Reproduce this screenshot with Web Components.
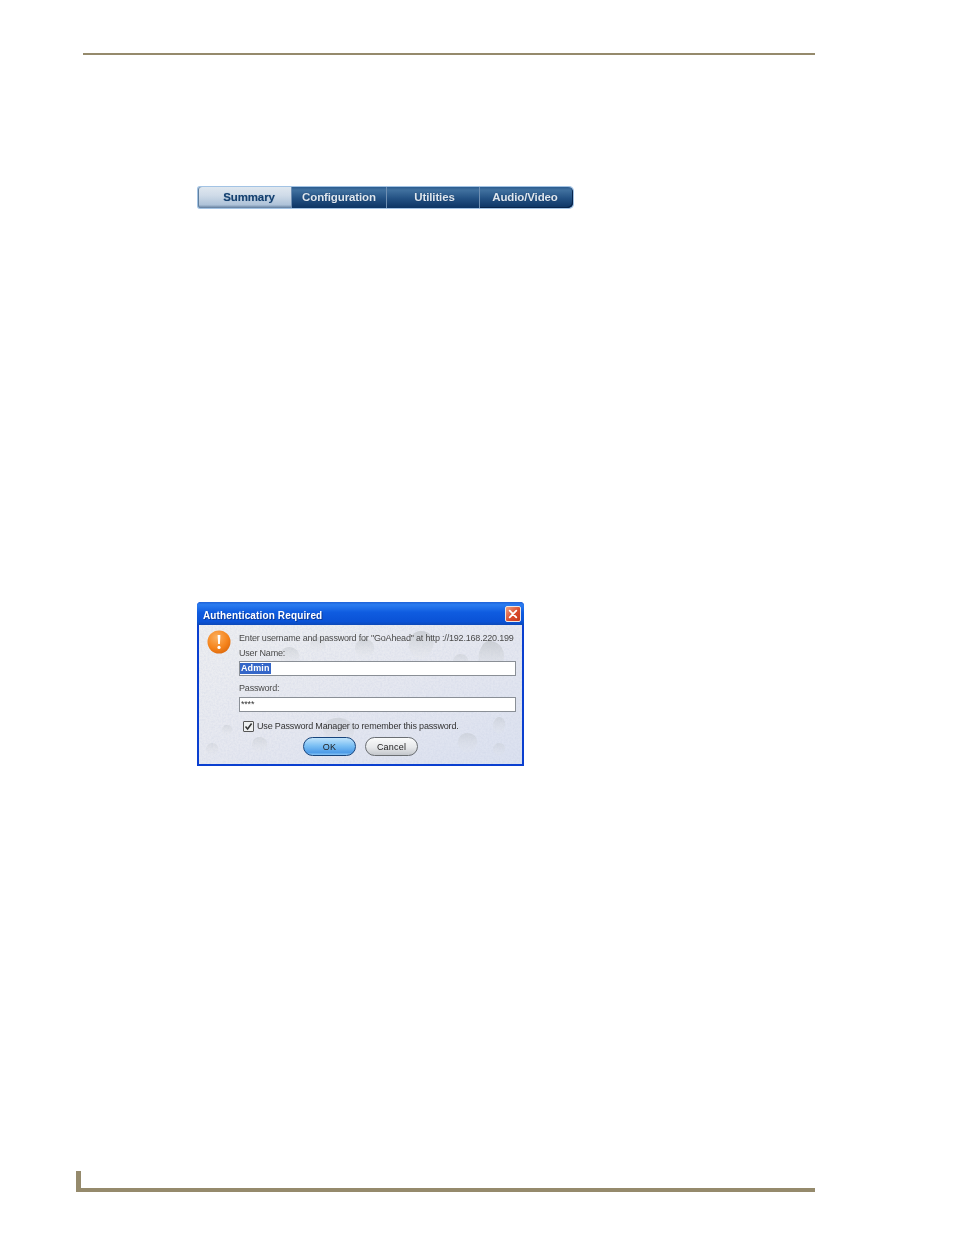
<!DOCTYPE html>
<html><head><meta charset="utf-8"><style>
html,body{margin:0;padding:0;background:#fff}
body{width:954px;height:1235px;overflow:hidden;font-family:"Liberation Sans",sans-serif}
doc-page{display:block}
</style></head><body>
<doc-page>
  <page-rule-top></page-rule-top>
  <tab-bar>
    <tab-item active w="93">Summary</tab-item>
    <tab-item w="95">Configuration</tab-item>
    <tab-item w="93">Utilities</tab-item>
    <tab-item w="94" last>Audio/Video</tab-item>
  </tab-bar>
  <auth-dialog></auth-dialog>
  <page-rule-bottom></page-rule-bottom>
</doc-page>
<script>
const def=(n,html,extra)=>customElements.define(n,class extends HTMLElement{
  constructor(){super();this.attachShadow({mode:'open'}).innerHTML=html;}
  connectedCallback(){extra&&extra(this)}
});
def('page-rule-top',`<style>:host{display:block;padding:53px 139px 0 83px}
div{height:2px;background:#958a6c}</style><div></div>`);
def('tab-bar',`<style>:host{display:flex;width:375px;height:21px;margin:131px 0 0 197px;padding:1px;
border-radius:3px 5px 5px 3px;background:#a3c3e4;box-sizing:content-box;filter:blur(.35px)}</style><slot></slot>`);
def('tab-item',`<style>:host{display:flex;align-items:center;justify-content:center;box-sizing:border-box;height:21px;
font:bold 11.5px "Liberation Sans",sans-serif;color:#dfe8f0;letter-spacing:-.12px;padding-bottom:2px;
background:linear-gradient(#2a5b8e 0,#41719f 14%,#235183 55%,#0d3463 100%);border-left:1px solid #6f8fb2;
text-shadow:0 0 1px #0a2a52}
:host([active]){color:#14406f;text-shadow:0 0 1px #7f9cbc;border-left:0;border-radius:3px 0 0 3px;padding-left:9px;
background:linear-gradient(#dfe7ef 0,#cfdbe8 40%,#aec2d8 85%,#5f7b9c 100%);box-shadow:inset 1px 0 0 #5f7f9f}
:host([last]){border-radius:0 5px 5px 0;box-shadow:inset -1px -1px 0 #08244a;padding-right:3px}
.u{display:inline-block}
</style><slot></slot>`,el=>{el.style.width=el.getAttribute('w')+'px';if(el.textContent==='Utilities')el.style.paddingLeft='3px'});
def('auth-dialog',`<style>
:host{display:block;position:relative;box-sizing:border-box;width:327px;height:164px;margin:393px 0 0 197px;
background:#0a3fd0;border-radius:4px 4px 0 0;padding:0 2px 2px;font-family:"Liberation Sans",sans-serif;color:#333;filter:blur(.35px)}
.title{height:23px;display:flex;align-items:center;justify-content:space-between;box-sizing:border-box;
background:linear-gradient(#1f62d8 0,#2a7cf0 12%,#0f5ce0 45%,#0a52d6 85%,#0c49b8 100%);border-radius:4px 4px 0 0;margin:0 -2px;padding:1px 3px 0 6px}
.title b{font:bold 10px "Liberation Sans",sans-serif;color:#fff;letter-spacing:.14px;text-shadow:1px 1px 0 #0a3a9a;position:relative;top:1px}
.x{width:16px;height:16px;border-radius:2px;border:1px solid #f0e6e0;background:linear-gradient(135deg,#f0a080,#d8482a 60%,#c43a1e);display:block;box-sizing:border-box;margin-top:-1px}
.body{position:relative;height:139px;background:#e4e9f3;display:grid;grid-template-columns:40px 1fr;overflow:hidden}
.bg{position:absolute;left:0;top:0;width:323px;height:139px}
.icon{position:relative;padding:5px 0 0 8px}
.main{position:relative;padding:6px 0 0 0;font-size:9px;letter-spacing:-.19px}
.l{height:14px;line-height:14px;white-space:nowrap;color:#4a4a4a}
.field{width:277px;height:15px;box-sizing:border-box;border:1px solid #8a8f96;background:#fff;display:flex;align-items:center;padding-left:0;font-size:9px}
.sel{background:#3466c8;color:#fff;font-weight:bold;padding:0 1px;line-height:11px;letter-spacing:.1px}
.pw{font-size:9px;color:#333;line-height:9px;letter-spacing:-.2px;margin-left:1px}
.chk{display:flex;align-items:center;gap:3px;margin:7px 0 0 4px;height:14px;letter-spacing:-.17px}
.cb{width:9px;height:9px;border:1px solid #555;background:#eef0f0;border-radius:1px;display:block}
.btns{display:flex;gap:9px;margin:4px 0 0 64px}
.btn{width:53px;height:19px;box-sizing:border-box;border-radius:10px;display:flex;align-items:center;justify-content:center;font-size:9px;letter-spacing:.2px;color:#222}
.ok{border:1.5px solid #16447c;background:linear-gradient(#bfe3fb,#7cc0f4 45%,#4e9ce8 85%,#88c4f4)}
.cancel{border:1.5px solid #6a6e72;background:linear-gradient(#fafbfb,#e6e8ea 55%,#c4c7cc)}
</style>
<div class="title"><b>Authentication Required</b>
<svg class="x" viewBox="0 0 16 16"><path d="M4.2 4.2 11.8 11.8M11.8 4.2 4.2 11.8" stroke="#fff" stroke-width="2" stroke-linecap="round"/></svg></div>
<div class="body">
<svg class="bg" viewBox="0 0 323 139" preserveAspectRatio="none">
<defs><linearGradient id="g" x1="0" y1="0" x2="1" y2="1"><stop offset="0" stop-color="#eeeff1"/><stop offset=".5" stop-color="#e6e8f0"/><stop offset="1" stop-color="#dbe1f0"/></linearGradient>
<linearGradient id="d" x1="0" y1="0" x2="0" y2="1"><stop offset="0" stop-color="#b4b9bd" stop-opacity=".55"/><stop offset="1" stop-color="#e8eaee" stop-opacity=".25"/></linearGradient>
<filter id="n" x="0" y="0" width="100%" height="100%"><feTurbulence type="fractalNoise" baseFrequency=".55" numOctaves="2" seed="4"/><feColorMatrix values="0 0 0 0 .55  0 0 0 0 .6  0 0 0 0 .75  0 0 0 .55 -.18"/></filter></defs>
<rect width="323" height="139" fill="url(#g)"/>
<rect width="323" height="139" filter="url(#n)"/>
<g fill="url(#d)">
<path d="M222 6c10 0 14 8 12 16-2 7-8 12-13 12-6-1-11-7-11-14 0-8 5-14 12-14z"/>
<path d="M292 16c12 2 16 14 11 24-4 8-12 10-18 6-6-5-7-16-3-23 2-5 6-8 10-7z"/>
<path d="M90 22c7 0 11 5 10 11-1 5-6 8-10 8s-9-4-9-10c0-5 4-9 9-9z" opacity=".7"/>
<path d="M165 14c7 0 11 5 10 11-1 5-6 8-10 8s-9-4-9-10c0-5 4-9 9-9z" opacity=".8"/>
<path d="M118 12c6 0 9 4 8 9-1 4-5 7-8 7s-7-3-7-8c0-4 3-8 7-8z" opacity=".6"/>
<path d="M261 29c6 0 9 4 8 9-1 4-5 7-8 7s-7-3-7-8c0-4 3-8 7-8z" opacity=".6"/>
<path d="M130 95c10-5 22-1 25 8 2 8-6 16-15 19-8-4-15-10-16-17 0-4 2-8 6-10z" opacity=".7"/>
<path d="M60 112c6 0 9 4 8 9s-5 7-8 7-7-3-7-8c0-4 3-8 7-8z" opacity=".6"/>
<path d="M28 100c4 0 6 3 5 6s-3 5-5 5-5-2-5-6c0-3 2-5 5-5z" opacity=".55"/>
<path d="M13 118c4 0 7 3 6 7s-4 6-6 6-6-3-6-7c0-3 3-6 6-6z" opacity=".5"/>
<path d="M268 108c6 0 11 4 10 10s-6 9-10 10c-5-1-9-5-9-11 0-5 4-9 9-9z" opacity=".65"/>
<path d="M300 92c4 0 7 4 6 9-1 4-3 8-6 8s-6-4-6-8c0-5 3-9 6-9z" opacity=".65"/>
<path d="M300 118c4 0 7 3 6 7s-4 6-6 6-6-3-6-7c0-3 3-6 6-6z" opacity=".5"/>
<path d="M205 118c5 0 8 3 7 7s-4 7-7 7-7-3-7-7c0-4 3-7 7-7z" opacity=".5"/>
</g></svg>
<div class="icon"><svg width="24" height="24" viewBox="0 0 24 24"><defs><radialGradient id="o" cx=".4" cy=".3" r=".8"><stop offset="0" stop-color="#fbb060"/><stop offset=".6" stop-color="#f5841c"/><stop offset="1" stop-color="#d8640a"/></radialGradient></defs>
<circle cx="12" cy="12" r="11.5" fill="url(#o)"/><path d="M10.6 5h2.8l-.5 9h-1.8z" fill="#fff"/><circle cx="12" cy="17.4" r="1.6" fill="#fff"/></svg></div>
<div class="main">
<div class="l">Enter username and password for "GoAhead" at http ://192.168.220.199</div>
<div class="l" style="position:relative;top:1px">User Name:</div>
<div class="field" style="margin-top:2px"><span class="sel">Admin</span></div>
<div class="l" style="margin-top:5px;height:16px">Password:</div>
<div class="field"><span class="pw">****</span></div>
<div class="chk"><svg class="cb" viewBox="0 0 9 9"><path d="M1.5 4.5 3.6 7 7.6 1.5" fill="none" stroke="#333" stroke-width="1.5"/></svg><span>Use Password Manager to remember this password.</span></div>
<div class="btns"><div class="btn ok">OK</div><div class="btn cancel">Cancel</div></div>
</div></div>`);
def('page-rule-bottom',`<style>:host{display:block;margin:405px 139px 0 76px;height:21px;box-sizing:border-box;
border-left:5px solid #958a6c;border-bottom:4px solid #958a6c}</style>`);
</script>
</body></html>
